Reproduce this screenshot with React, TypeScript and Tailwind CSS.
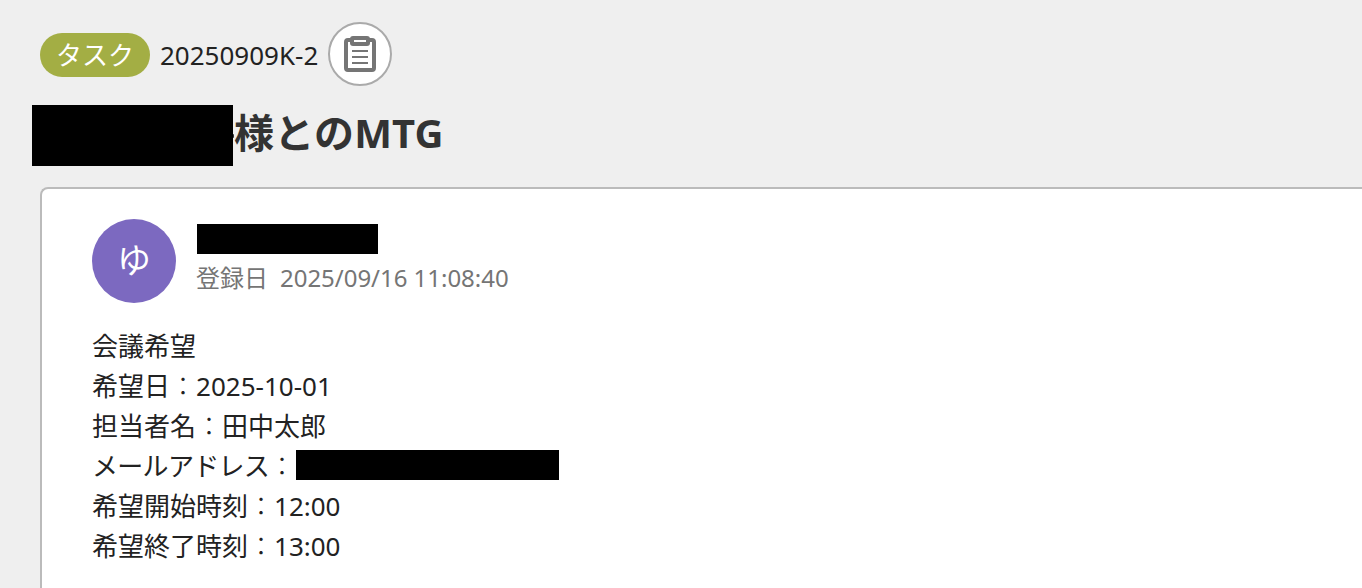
import type { ReactNode } from "react";

function Redacted({ className }: { className: string }) {
  return <span aria-hidden="true" className={`block shrink-0 bg-black ${className}`} />;
}

function ClipboardIcon() {
  return (
    <svg width="32" height="36" viewBox="0 0 32 36" fill="none" aria-hidden="true">
      <rect x="2" y="4" width="28" height="30" rx="2" stroke="#757575" strokeWidth="4" />
      <rect x="6" y="0" width="20" height="10" rx="3" fill="#757575" />
      <path d="M10 5h12" stroke="#fff" strokeWidth="2" />
      <path d="M8 15h16M8 21h16M8 27h16" stroke="#757575" strokeWidth="2" />
    </svg>
  );
}

function Colon() {
  return <span className="font-light">：</span>;
}

function Line({ children }: { children: ReactNode }) {
  return <p className="flex h-10 items-center whitespace-nowrap">{children}</p>;
}

export default function App() {
  return (
    <div className="flex h-[588px] flex-col overflow-hidden bg-[#efefef] pt-[22px] font-['Noto_Sans','Noto_Sans_CJK_JP',sans-serif] text-[#222]">
      <header className="flex h-16 items-center pl-10">
        <span className="mt-[2px] flex h-11 w-[110px] items-center justify-center rounded-full bg-[#a3ae44] text-[26px] text-white">
          タスク
        </span>
        <span className="mt-[2px] ml-[10px] w-[158px] whitespace-nowrap text-[26px]">20250909K-2</span>
        <button
          type="button"
          aria-label="Copy"
          className="ml-[10px] grid size-16 place-items-center rounded-full border-2 border-[#aaa] bg-white"
        >
          <ClipboardIcon />
        </button>
      </header>

      <h1 className="mt-[19px] flex h-[61px] items-center pl-8 text-[40px] font-bold text-[#333]">
        <Redacted className="h-[61px] w-[201px]" />
        {/* edge of the hidden name */}
        <span className="h-1 w-px rounded-r-full bg-[#333]" />
        <span className="mb-[6px] whitespace-nowrap leading-none tracking-[0.2px]">様とのMTG</span>
      </h1>

      <main className="mt-[21px] ml-10 flex-1 rounded-tl-lg border-t-2 border-l-2 border-[#bbb] bg-white pt-[30px] pl-[50px]">
        <div className="flex h-[84px]">
          <div className="grid size-[84px] place-items-center rounded-full bg-[#7c69c0] pb-[3px] text-[34px] leading-none text-white">
            ゆ
          </div>
          <div className="ml-5 pt-[5px]">
            <Redacted className="ml-px h-[30px] w-[181px]" />
            <div className="flex h-[48px] items-center gap-3 text-2xl text-[#757575]">
              <span>登録日</span>
              <span className="tracking-[-0.03px]">2025/09/16 11:08:40</span>
            </div>
          </div>
        </div>

        <div className="mt-[23px] text-[26px]">
          <Line>会議希望</Line>
          <Line>
            希望日
            <Colon />
            2025-10-01
          </Line>
          <Line>
            担当者名
            <Colon />
            田中太郎
          </Line>
          <Line>
            <span className="w-[204px]">
              <span className="tracking-[-0.7px]">メールアドレス</span>
              <Colon />
            </span>
            <Redacted className="mb-[2px] h-[30px] w-[263px]" />
          </Line>
          <Line>
            希望開始時刻
            <Colon />
            12:00
          </Line>
          <Line>
            希望終了時刻
            <Colon />
            13:00
          </Line>
        </div>
      </main>
    </div>
  );
}
